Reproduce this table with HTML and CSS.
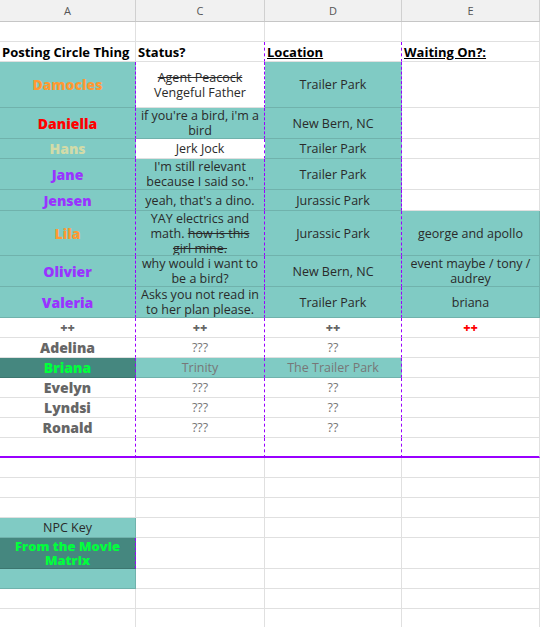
FILE: index.html
```html
<!DOCTYPE html>
<html lang="en">
<head>
  <meta charset="UTF-8" />
  <title>Posting Circle</title>
  <link rel="stylesheet" href="styles.css">
</head>
<body>
  <div class="sheet">
    <div class="colhead">
      <div class="head">A</div>
      <div class="head">C</div>
      <div class="head">D</div>
      <div class="head">E</div>
    </div>

    <div class="row">
      <div class="cell"></div><div class="cell"></div><div class="cell"></div><div class="cell"></div>
    </div>

    <div class="row">
      <div class="cell label">Posting Circle Thing</div>
      <div class="cell label dash">Status?</div>
      <div class="cell label under dash">Location</div>
      <div class="cell label under">Waiting On?:</div>
    </div>

    <div class="row h46">
      <div class="cell teal name orange dash">Damocles</div>
      <div class="cell dash"><span><s>Agent Peacock</s><br>Vengeful Father</span></div>
      <div class="cell teal dash">Trailer Park</div>
      <div class="cell"></div>
    </div>

    <div class="row h31">
      <div class="cell teal name red dash">Daniella</div>
      <div class="cell teal dash">if you're a bird, i'm a bird</div>
      <div class="cell teal dash">New Bern, NC</div>
      <div class="cell"></div>
    </div>

    <div class="row">
      <div class="cell teal name khaki dash">Hans</div>
      <div class="cell dash">Jerk Jock</div>
      <div class="cell teal dash">Trailer Park</div>
      <div class="cell"></div>
    </div>

    <div class="row h31">
      <div class="cell teal name purple dash">Jane</div>
      <div class="cell teal dash">I'm still relevant because I said so.''</div>
      <div class="cell teal dash">Trailer Park</div>
      <div class="cell"></div>
    </div>

    <div class="row h21">
      <div class="cell teal name purple dash">Jensen</div>
      <div class="cell teal dash">yeah, that's a dino.</div>
      <div class="cell teal dash">Jurassic Park</div>
      <div class="cell"></div>
    </div>

    <div class="row h45">
      <div class="cell teal name orange dash">Lila</div>
      <div class="cell teal dash"><span>YAY electrics and math. <s>how is this <span class="nowrap">girl mine.</span></s></span></div>
      <div class="cell teal dash">Jurassic Park</div>
      <div class="cell teal">george and apollo</div>
    </div>

    <div class="row h31">
      <div class="cell teal name purple dash">Olivier</div>
      <div class="cell teal dash">why would i want to be a bird?</div>
      <div class="cell teal dash">New Bern, NC</div>
      <div class="cell teal">event maybe / tony / audrey</div>
    </div>

    <div class="row h31">
      <div class="cell teal name purple dash">Valeria</div>
      <div class="cell teal dash">Asks you not read in to her plan please.</div>
      <div class="cell teal dash">Trailer Park</div>
      <div class="cell teal">briana</div>
    </div>

    <div class="row">
      <div class="cell plus dash">++</div>
      <div class="cell plus dash">++</div>
      <div class="cell plus dash">++</div>
      <div class="cell plus red">++</div>
    </div>

    <div class="row">
      <div class="cell name grey dash">Adelina</div>
      <div class="cell unknown dash">???</div>
      <div class="cell unknown dash">??</div>
      <div class="cell"></div>
    </div>

    <div class="row">
      <div class="cell deep name green dash">Briana</div>
      <div class="cell teal unknown dash">Trinity</div>
      <div class="cell teal unknown dash">The Trailer Park</div>
      <div class="cell"></div>
    </div>

    <div class="row">
      <div class="cell name grey dash">Evelyn</div>
      <div class="cell unknown dash">???</div>
      <div class="cell unknown dash">??</div>
      <div class="cell"></div>
    </div>

    <div class="row">
      <div class="cell name grey dash">Lyndsi</div>
      <div class="cell unknown dash">???</div>
      <div class="cell unknown dash">??</div>
      <div class="cell"></div>
    </div>

    <div class="row">
      <div class="cell name grey dash">Ronald</div>
      <div class="cell unknown dash">???</div>
      <div class="cell unknown dash">??</div>
      <div class="cell"></div>
    </div>

    <div class="row cutoff">
      <div class="cell dash"></div><div class="cell dash"></div><div class="cell dash"></div><div class="cell"></div>
    </div>

    <div class="row">
      <div class="cell"></div><div class="cell"></div><div class="cell"></div><div class="cell"></div>
    </div>
    <div class="row">
      <div class="cell"></div><div class="cell"></div><div class="cell"></div><div class="cell"></div>
    </div>
    <div class="row">
      <div class="cell"></div><div class="cell"></div><div class="cell"></div><div class="cell"></div>
    </div>

    <div class="row">
      <div class="cell teal">NPC Key</div>
      <div class="cell"></div><div class="cell"></div><div class="cell"></div>
    </div>

    <div class="row h31">
      <div class="cell deep name green small dash">From the Movie Matrix</div>
      <div class="cell"></div><div class="cell"></div><div class="cell"></div>
    </div>

    <div class="row">
      <div class="cell teal"></div>
      <div class="cell"></div><div class="cell"></div><div class="cell"></div>
    </div>

    <div class="row">
      <div class="cell"></div><div class="cell"></div><div class="cell"></div><div class="cell"></div>
    </div>
    <div class="row">
      <div class="cell"></div><div class="cell"></div><div class="cell"></div><div class="cell"></div>
    </div>
  </div>
</body>
</html>
```

FILE: styles.css
```css
body {
  margin: 0;
  font-family: 'Open Sans', sans-serif;
  font-size: 12.5px;
  color: #2a2a2a;
  background: #fff;
}

.sheet {
  width: 540px;
}

.colhead,
.row {
  display: grid;
  grid-template-columns: 136px 129px 137px 138px;
}

.colhead {
  height: 22px;
  box-sizing: border-box;
  background-color: #f1f1f1;
  border-bottom: 1px solid #c6c6c6;
}

.head {
  display: flex;
  align-items: center;
  justify-content: center;
  border-right: 1px solid #d0d0d0;
  font-size: 11px;
  color: #555;
}

.row {
  height: 20px;
}

.row.h21 { height: 21px; }
.row.h31 { height: 31px; }
.row.h45 { height: 45px; }
.row.h46 { height: 46px; }

.cell {
  box-sizing: border-box;
  min-height: 0;
  overflow: hidden;
  display: flex;
  align-items: center;
  justify-content: center;
  text-align: center;
  padding: 0 2px;
  line-height: 15px;
  border-right: 1px solid rgba(0, 0, 0, 0.12);
  border-bottom: 1px solid rgba(0, 0, 0, 0.12);
}

.cell.dash {
  border-right: 1px dashed #9900ff;
}

.row.cutoff .cell {
  border-bottom: 2px solid #9900ff;
}

.nowrap {
  white-space: nowrap;
}

.teal {
  background-color: #80cbc4;
}

.deep {
  background-color: #45877f;
}

.label {
  justify-content: flex-start;
  align-items: flex-end;
  padding-bottom: 1px;
  font-size: 13px;
  font-weight: 700;
  color: #000;
}

.label.under {
  text-decoration: underline;
}

.name {
  font-weight: 800;
  font-size: 14px;
}

.name.small {
  font-size: 13px;
  line-height: 14px;
}

.orange { color: #ff9933; }
.red { color: #ff0000; }
.khaki { color: #d2dba8; }
.purple { color: #9933ff; }
.grey { color: #666; }
.green { color: #00ff3c; }

.plus {
  font-weight: 800;
  color: #666;
}

.plus.red {
  color: #ff0000;
}

.unknown {
  color: #777;
}
```
